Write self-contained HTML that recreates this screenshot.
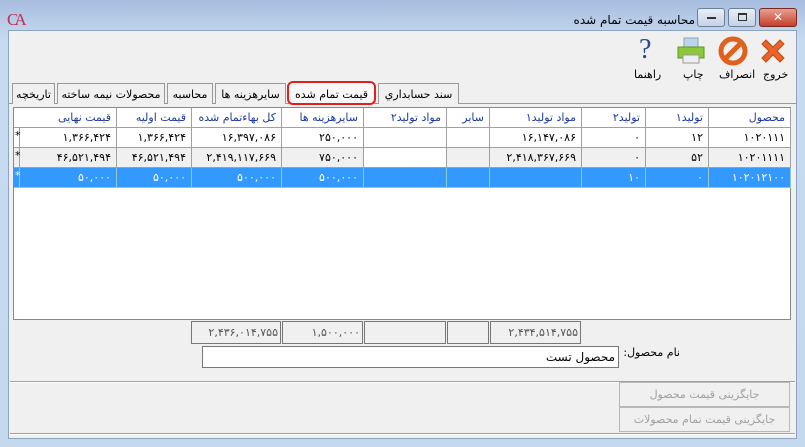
<!DOCTYPE html>
<html><head><meta charset="utf-8"><style>
*{box-sizing:border-box;margin:0;padding:0}
body{width:805px;height:447px;overflow:hidden;background:linear-gradient(#a8bddf,#c6daf0 40px,#c4d8ee);font-family:"DejaVu Sans","Liberation Sans",sans-serif;font-size:11px;color:#000;position:relative}
.a{position:absolute}
.client{left:8px;top:30px;width:789px;height:409px;background:#f0f0f0;border:1px solid #8ea3c0}
.t{direction:rtl;white-space:nowrap}
.wb{top:8px;height:19px;border:1px solid #6d7f99;border-radius:3px;background:linear-gradient(#e8eef7,#c5d3e6)}
.grid{left:13px;top:107px;width:778px;height:213px;background:#fff;border:1px solid #888}
.c{position:absolute;height:20px;border-right:1px solid #a0a0a0;border-bottom:1px solid #a0a0a0;text-align:right;padding:3px 5px 0 3px;direction:ltr;font-size:11px}
.i{text-align:left!important;padding:1px 0 0 1px!important}
.h{background:#fff;color:#1c3aa0;text-align:right;direction:rtl}
.tab{top:83px;height:21px;border:1px solid #9a9a9a;border-bottom:none;background:#f0f0f0;padding:4px 3px 0;text-align:center;direction:rtl;font-size:11px}
.tot{top:321px;height:23px;border:1px solid #777;background:#f0f0f0;color:#555;text-align:right;padding:4px 2px 0;font-size:11px}
.btn{left:619px;width:171px;height:25px;border:1px solid #b8b8b8;background:#f0f0f0;color:#a0a0a0;text-align:center;padding-top:5px;direction:rtl}
</style></head><body>
<div class="a" style="left:7px;top:10px;color:#c0305a;font-family:'Liberation Serif',serif;font-size:17px;letter-spacing:-4px">CA</div>
<div class="a t" style="right:110px;top:13px;font-size:12px">محاسبه قیمت تمام شده</div>
<div class="a wb" style="left:697px;width:28px"><div class="a" style="left:9px;top:8px;width:9px;height:2px;background:#333"></div></div>
<div class="a wb" style="left:728px;width:28px"><div class="a" style="left:9px;top:4px;width:9px;height:8px;border:1px solid #333;border-top-width:2px"></div></div>
<div class="a wb" style="left:759px;width:38px;background:linear-gradient(#e8a090,#c4402a);border-color:#7a2a20;color:#fff;text-align:center;font-weight:bold;font-size:12px;line-height:17px">✕</div>
<div class="a client"></div>
<svg class="a" style="left:757px;top:35px" width="32" height="32" viewBox="0 0 32 32"><path d="M5 9 L9 5 L16 12 L23 5 L27 9 L20 16 L27 23 L23 27 L16 20 L9 27 L5 23 L12 16Z" fill="#e8642a" stroke="#c04a18"/></svg>
<svg class="a" style="left:717px;top:35px" width="32" height="32" viewBox="0 0 32 32"><circle cx="16" cy="16" r="12" fill="none" stroke="#e0601e" stroke-width="5"/><line x1="8" y1="24" x2="24" y2="8" stroke="#e0601e" stroke-width="5"/></svg>
<svg class="a" style="left:675px;top:35px" width="32" height="32" viewBox="0 0 32 32"><rect x="9" y="3" width="14" height="10" fill="#bcd4ee" stroke="#8aa"/><rect x="3" y="12" width="26" height="11" fill="#8cc83a" stroke="#5a9a20"/><rect x="8" y="20" width="16" height="8" fill="#eee" stroke="#999"/></svg>
<div class="a" style="left:639px;top:34px;font-size:28px;color:#2a4a8a;font-family:'Liberation Serif',serif">?</div>
<div class="a t" style="left:763px;top:68px">خروج</div>
<div class="a t" style="left:719px;top:68px">انصراف</div>
<div class="a t" style="left:683px;top:68px">چاپ</div>
<div class="a t" style="left:634px;top:68px">راهنما</div>
<div class="a" style="left:8px;top:103px;width:789px;height:1px;background:#9a9a9a"></div>
<div class="a tab" style="left:12px;width:43px">تاریخچه</div>
<div class="a tab" style="left:57px;width:108px">محصولات نیمه ساخته</div>
<div class="a tab" style="left:167px;width:46px">محاسبه</div>
<div class="a tab" style="left:215px;width:71px">سایرهزینه ها</div>
<div class="a tab" style="left:378px;width:81px">سند حسابداري</div>
<div class="a tab" style="left:287px;top:81px;width:89px;height:24px;border:2px solid #e02020;border-radius:6px;background:#f8f8f8;padding-top:5px">قیمت تمام شده</div>
<div class="a grid">
<div class="c h" style="left:0;top:0;width:6px"></div>
<div class="c h" style="left:6px;top:0;width:97px">قیمت نهایی</div>
<div class="c h" style="left:103px;top:0;width:75px">قیمت اولیه</div>
<div class="c h" style="left:178px;top:0;width:90px">کل بهاءتمام شده</div>
<div class="c h" style="left:268px;top:0;width:82px">سایرهزینه ها</div>
<div class="c h" style="left:350px;top:0;width:83px">مواد تولید۲</div>
<div class="c h" style="left:433px;top:0;width:43px">سایر</div>
<div class="c h" style="left:476px;top:0;width:92px">مواد تولید۱</div>
<div class="c h" style="left:568px;top:0;width:64px">تولید۲</div>
<div class="c h" style="left:632px;top:0;width:63px">تولید۱</div>
<div class="c h" style="left:695px;top:0;width:82px">محصول</div>

<div class="c i" style="left:0;top:20px;width:6px">*</div>
<div class="c" style="left:6px;top:20px;width:97px">۱,۳۶۶,۴۲۴</div>
<div class="c" style="left:103px;top:20px;width:75px">۱,۳۶۶,۴۲۴</div>
<div class="c" style="left:178px;top:20px;width:90px">۱۶,۳۹۷,۰۸۶</div>
<div class="c" style="left:268px;top:20px;width:82px">۲۵۰,۰۰۰</div>
<div class="c" style="left:350px;top:20px;width:83px"></div>
<div class="c" style="left:433px;top:20px;width:43px"></div>
<div class="c" style="left:476px;top:20px;width:92px">۱۶,۱۴۷,۰۸۶</div>
<div class="c" style="left:568px;top:20px;width:64px">۰</div>
<div class="c" style="left:632px;top:20px;width:63px">۱۲</div>
<div class="c" style="left:695px;top:20px;width:82px">۱۰۲۰۱۱۱</div>

<div class="c i" style="left:0;top:40px;width:6px;background:#f0f0f0">*</div>
<div class="c" style="left:6px;top:40px;width:97px;background:#f0f0f0">۴۶,۵۲۱,۴۹۴</div>
<div class="c" style="left:103px;top:40px;width:75px;background:#f0f0f0">۴۶,۵۲۱,۴۹۴</div>
<div class="c" style="left:178px;top:40px;width:90px;background:#f0f0f0">۲,۴۱۹,۱۱۷,۶۶۹</div>
<div class="c" style="left:268px;top:40px;width:82px;background:#f0f0f0">۷۵۰,۰۰۰</div>
<div class="c" style="left:350px;top:40px;width:83px;background:#fff"></div>
<div class="c" style="left:433px;top:40px;width:43px;background:#f0f0f0"></div>
<div class="c" style="left:476px;top:40px;width:92px;background:#f0f0f0">۲,۴۱۸,۳۶۷,۶۶۹</div>
<div class="c" style="left:568px;top:40px;width:64px;background:#f0f0f0">۰</div>
<div class="c" style="left:632px;top:40px;width:63px;background:#f0f0f0">۵۲</div>
<div class="c" style="left:695px;top:40px;width:82px;background:#f0f0f0">۱۰۲۰۱۱۱۱</div>

<div class="a" style="left:0;top:60px;width:777px;height:20px;background:#3399ff"></div>
<div class="c i" style="left:0;top:60px;width:6px;color:#fff;border-color:#8cc">*</div>
<div class="c" style="left:6px;top:60px;width:97px;color:#fff;border-color:#8cc">۵۰,۰۰۰</div>
<div class="c" style="left:103px;top:60px;width:75px;color:#fff;border-color:#8cc">۵۰,۰۰۰</div>
<div class="c" style="left:178px;top:60px;width:90px;color:#fff;border-color:#8cc">۵۰۰,۰۰۰</div>
<div class="c" style="left:268px;top:60px;width:82px;color:#fff;border-color:#8cc">۵۰۰,۰۰۰</div>
<div class="c" style="left:350px;top:60px;width:83px;border-color:#8cc"></div>
<div class="c" style="left:433px;top:60px;width:43px;border-color:#8cc"></div>
<div class="c" style="left:476px;top:60px;width:92px;border-color:#8cc"></div>
<div class="c" style="left:568px;top:60px;width:64px;color:#fff;border-color:#8cc">۱۰</div>
<div class="c" style="left:632px;top:60px;width:63px;color:#fff;border-color:#8cc">۰</div>
<div class="c" style="left:695px;top:60px;width:82px;color:#fff;border-color:#8cc">۱۰۲۰۱۲۱۰۰</div>
</div>
<div class="a tot" style="left:191px;width:90px">۲,۴۳۶,۰۱۴,۷۵۵</div>
<div class="a tot" style="left:282px;width:81px">۱,۵۰۰,۰۰۰</div>
<div class="a tot" style="left:364px;width:82px"></div>
<div class="a tot" style="left:447px;width:42px"></div>
<div class="a tot" style="left:490px;width:91px">۲,۴۳۴,۵۱۴,۷۵۵</div>
<div class="a t" style="right:125px;top:346px">نام محصول:</div>
<div class="a t" style="left:202px;top:346px;width:417px;height:22px;border:1px solid #777;background:#fff;padding:3px 3px 0;font-size:12px">محصول تست</div>
<div class="a" style="left:10px;top:381px;width:785px;height:2px;border-top:1px solid #a0a0a0;border-bottom:1px solid #fff"></div>
<div class="a btn" style="top:382px">جایگزینی قیمت محصول</div>
<div class="a btn" style="top:407px">جایگزینی قیمت تمام محصولات</div>
<div class="a" style="left:10px;top:433px;width:785px;height:2px;border-top:1px solid #a0a0a0;border-bottom:1px solid #fff"></div>
</body></html>
